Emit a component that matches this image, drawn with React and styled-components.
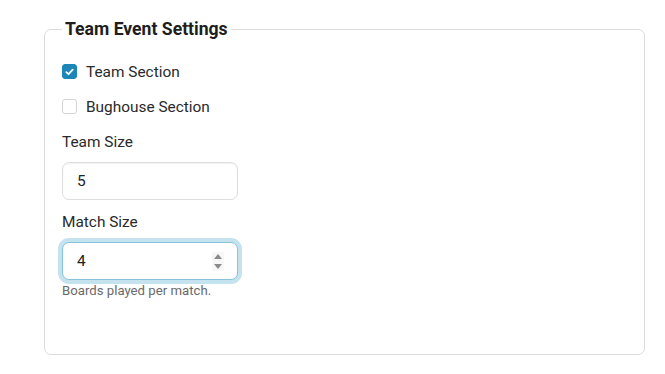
import React from "react";
import styled, { createGlobalStyle } from "styled-components";

const Global = createGlobalStyle`
  html, body { margin: 0; padding: 0; background: #fff; }
  body { font-family: Roboto, "Noto Sans", "Liberation Sans", sans-serif; color: #212529; }
`;

const Page = styled.div`
  padding: 15px 20px 0 44px;
`;

const Fieldset = styled.fieldset`
  margin: 0;
  width: 601px;
  box-sizing: border-box;
  height: 340px;
  border: 1px solid #dcdcdc;
  border-radius: 7px;
  padding: 11px 17px 0 17px;
  display: flex;
  flex-direction: column;
  align-items: flex-start;
`;

const Legend = styled.legend`
  padding: 0 3px;
  font-size: 17.6px;
  font-weight: 700;
  color: #1e1e1e;
  line-height: 28px;
`;

const CheckRow = styled.label`
  display: flex;
  align-items: center;
  gap: 9px;
  height: 35px;
  font-size: 15.4px;
  color: #2a2a2a;
`;

const Box = styled.span`
  width: 15px;
  height: 15px;
  box-sizing: border-box;
  border-radius: 3px;
  border: 1px solid ${p => (p.$checked ? "#1b87b6" : "#d4d4d4")};
  background: ${p => (p.$checked ? "#1b87b6" : "#fff")};
  display: flex;
  align-items: center;
  justify-content: center;
`;

const Field = styled.div`
  display: flex;
  flex-direction: column;
  margin-top: ${p => p.$mt}px;
`;

const Label = styled.div`
  font-size: 15.4px;
  color: #2a2a2a;
  line-height: 20px;
  margin-bottom: 10px;
`;

const InputWrap = styled.div`
  position: relative;
  width: 176px;
  height: 38px;
  box-sizing: border-box;
  border-radius: 7px;
  border: 1px solid ${p => (p.$focus ? "#86c2da" : "#dedede")};
  box-shadow: ${p =>
    p.$focus
      ? "0 0 0 4px #c4e3ef"
      : "inset 0 1px 2px rgba(0,0,0,0.06)"};
  background: #fff;
  display: flex;
  align-items: center;
`;

const Input = styled.input`
  border: none;
  outline: none;
  background: transparent;
  font-family: inherit;
  font-size: 15.4px;
  color: #222;
  padding: 0 0 0 14px;
  width: 100%;
  height: 100%;
  box-sizing: border-box;
`;

const Spinner = styled.div`
  position: absolute;
  right: 13px;
  top: 9px;
  width: 12px;
  height: 19px;
  background: #f7f7f7;
  display: flex;
  flex-direction: column;
  align-items: center;
  justify-content: space-between;
  padding: 2px 0;
  box-sizing: border-box;
`;

const Help = styled.div`
  font-size: 13.2px;
  color: #6a6a6a;
  margin-top: 3px;
  line-height: 16px;
`;

const Check = () => (
  <svg width="9" height="8" viewBox="0 0 9 8">
    <path d="M1.3 4.2 L3.5 6.2 L7.7 1.6" stroke="#fff" strokeWidth="1.8" fill="none" strokeLinecap="round" strokeLinejoin="round" />
  </svg>
);

export default function App() {
  return (
    <>
      <Global />
      <Page>
        <Fieldset>
          <Legend>Team Event Settings</Legend>
          <CheckRow>
            <Box $checked><Check /></Box>
            Team Section
          </CheckRow>
          <CheckRow>
            <Box />
            Bughouse Section
          </CheckRow>
          <Field $mt={8}>
            <Label>Team Size</Label>
            <InputWrap>
              <Input type="text" defaultValue="5" readOnly />
            </InputWrap>
          </Field>
          <Field $mt={12}>
            <Label>Match Size</Label>
            <InputWrap $focus>
              <Input type="text" defaultValue="4" readOnly />
              <Spinner>
                <svg width="8" height="5" viewBox="0 0 8 5"><path d="M0 5 L4 0 L8 5 Z" fill="#8a8a8a" /></svg>
                <svg width="8" height="5" viewBox="0 0 8 5"><path d="M0 0 L4 5 L8 0 Z" fill="#8a8a8a" /></svg>
              </Spinner>
            </InputWrap>
            <Help>Boards played per match.</Help>
          </Field>
        </Fieldset>
      </Page>
    </>
  );
}
